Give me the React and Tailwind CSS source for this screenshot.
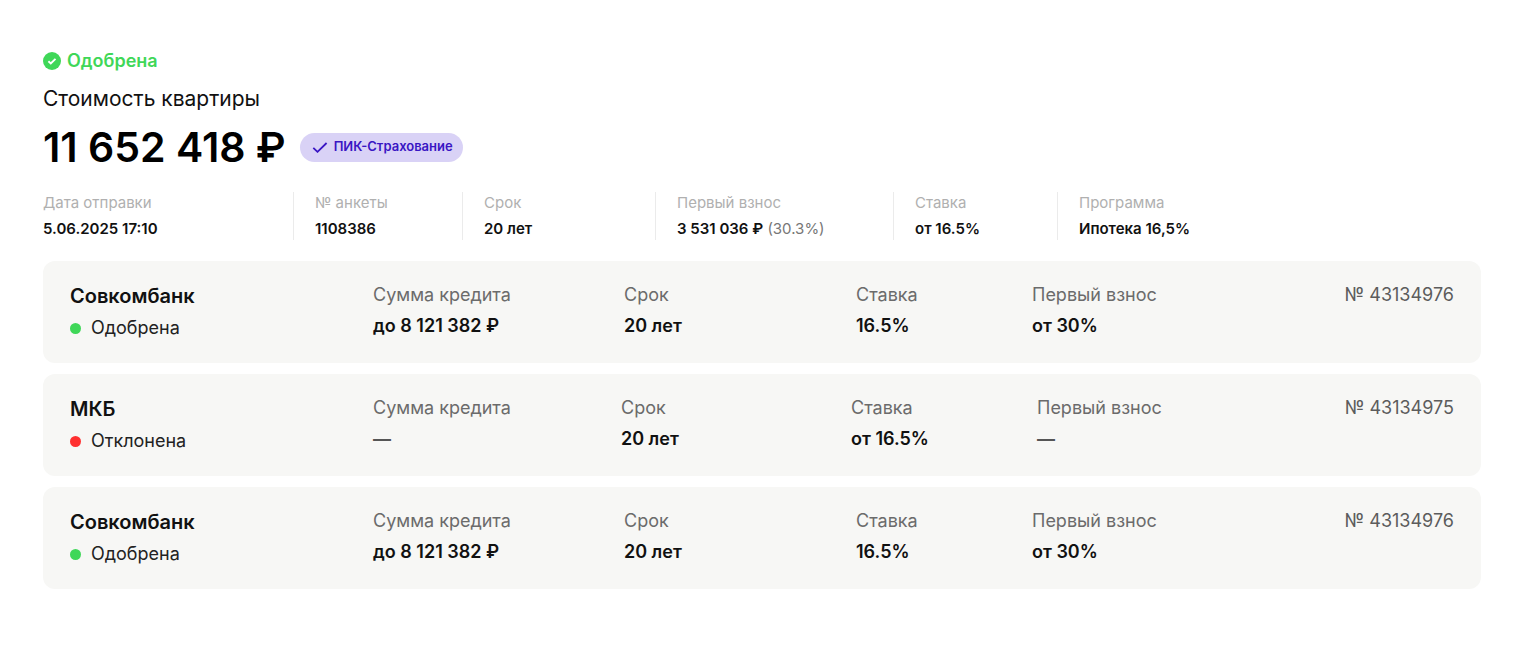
import React from 'react';

const summary = [
  { label: 'Дата отправки', value: '5.06.2025 17:10' },
  { label: '№ анкеты', value: '1108386' },
  { label: 'Срок', value: '20 лет' },
  { label: 'Первый взнос', value: '3 531 036 ₽', note: '(30.3%)' },
  { label: 'Ставка', value: 'от 16.5%' },
  { label: 'Программа', value: 'Ипотека 16,5%' },
];

const offers = [
  { id: 1, bank: 'Совкомбанк', approved: true, sum: 'до 8 121 382 ₽', term: '20 лет', rate: '16.5%', payment: 'от 30%', number: '43134976' },
  { id: 2, bank: 'МКБ', approved: false, sum: null, term: '20 лет', rate: 'от 16.5%', payment: null, number: '43134975' },
  { id: 3, bank: 'Совкомбанк', approved: true, sum: 'до 8 121 382 ₽', term: '20 лет', rate: '16.5%', payment: 'от 30%', number: '43134976' },
];

const ApprovedIcon = () => (
  <svg width="18" height="18" viewBox="0 0 18 18" fill="none" aria-hidden="true">
    <circle cx="9" cy="9" r="9" fill="#3fd758" />
    <path d="M5.4 9.2l2.4 2.3 4.7-4.7" stroke="#fff" strokeWidth="1.9" />
  </svg>
);

const CheckIcon = () => (
  <svg width="16" height="12" viewBox="0 0 16 12" fill="none" aria-hidden="true">
    <path d="M1.3 6.8l4.2 4L14.6 2" stroke="#3a16c4" strokeWidth="1.8" />
  </svg>
);

const Field = ({ label, value }) => (
  <div>
    <dt className="text-[#6b6b6b]">{label}</dt>
    <dd className={`mt-[3px] ${value ? 'font-semibold text-[#111111]' : 'font-bold text-[#555555]'}`}>{value || '—'}</dd>
  </div>
);

const OfferCard = ({ offer }) => (
  <article
    className={`grid rounded-xl bg-[#f7f7f5] px-[27px] pt-5 pb-[21px] text-lg leading-7 ${
      offer.approved
        ? 'grid-cols-[303fr_251fr_232fr_176fr_422fr]'
        : 'grid-cols-[303fr_248fr_230fr_186fr_417fr]'
    }`}
  >
    <div>
      <h2 className="text-xl leading-[30px] font-semibold text-[#111111]">{offer.bank}</h2>
      <p className="mt-[3px] flex items-center gap-[10px] text-[#222222]">
        <span className={`h-[11px] w-[11px] rounded-full ${offer.approved ? 'bg-[#3fd758]' : 'bg-[#ff3030]'}`}></span>
        {offer.approved ? 'Одобрена' : 'Отклонена'}
      </p>
    </div>
    <dl className="col-span-4 grid grid-cols-subgrid">
      <Field label="Сумма кредита" value={offer.sum} />
      <Field label="Срок" value={offer.term} />
      <Field label="Ставка" value={offer.rate} />
      <div className="flex justify-between">
        <Field label="Первый взнос" value={offer.payment} />
        <span className="text-[#5c5c5c]">№ {offer.number}</span>
      </div>
    </dl>
  </article>
);

const App = () => {
  return (
    <main className="bg-white pt-[49px] pr-[39px] pb-[59px] pl-[43px] font-['Inter','Liberation_Sans',sans-serif]">
      <header>
        <p className="flex items-center gap-[6px] text-lg leading-6 font-semibold text-[#3fd758]">
          <ApprovedIcon />
          Одобрена
        </p>
        <p className="mt-3 text-[21px] leading-7 text-[#111111]">Стоимость квартиры</p>
        <div className="mt-2 flex items-center gap-[14px]">
          <h1 className="text-[41px] leading-[52px] font-semibold text-black">11 652 418 ₽</h1>
          <span className="flex h-[29px] items-center gap-[6px] rounded-full bg-[#d9d2f6] pr-[10px] pl-3 text-[13px] font-semibold text-[#3a16c4]">
            <CheckIcon />
            ПИК-Страхование
          </span>
        </div>
      </header>

      <dl className="mt-[19px] grid grid-cols-[250fr_169fr_193fr_238fr_164fr_424fr]">
        {summary.map((item) => (
          <div key={item.label} className="border-l border-[#ebebeb] pl-[21px] first:border-l-0 first:pl-0">
            <dt className="text-[15px] leading-[22px] text-[#b0b0b0]">{item.label}</dt>
            <dd className="mt-1 text-[15px] leading-[22px] font-semibold text-[#111111]">
              {item.value}
              {item.note && <span className="font-normal text-[#777777]"> {item.note}</span>}
            </dd>
          </div>
        ))}
      </dl>

      <section className="mt-[21px] flex flex-col gap-[11px]">
        {offers.map((offer) => (
          <OfferCard key={offer.id} offer={offer} />
        ))}
      </section>
    </main>
  );
};

export default App;
